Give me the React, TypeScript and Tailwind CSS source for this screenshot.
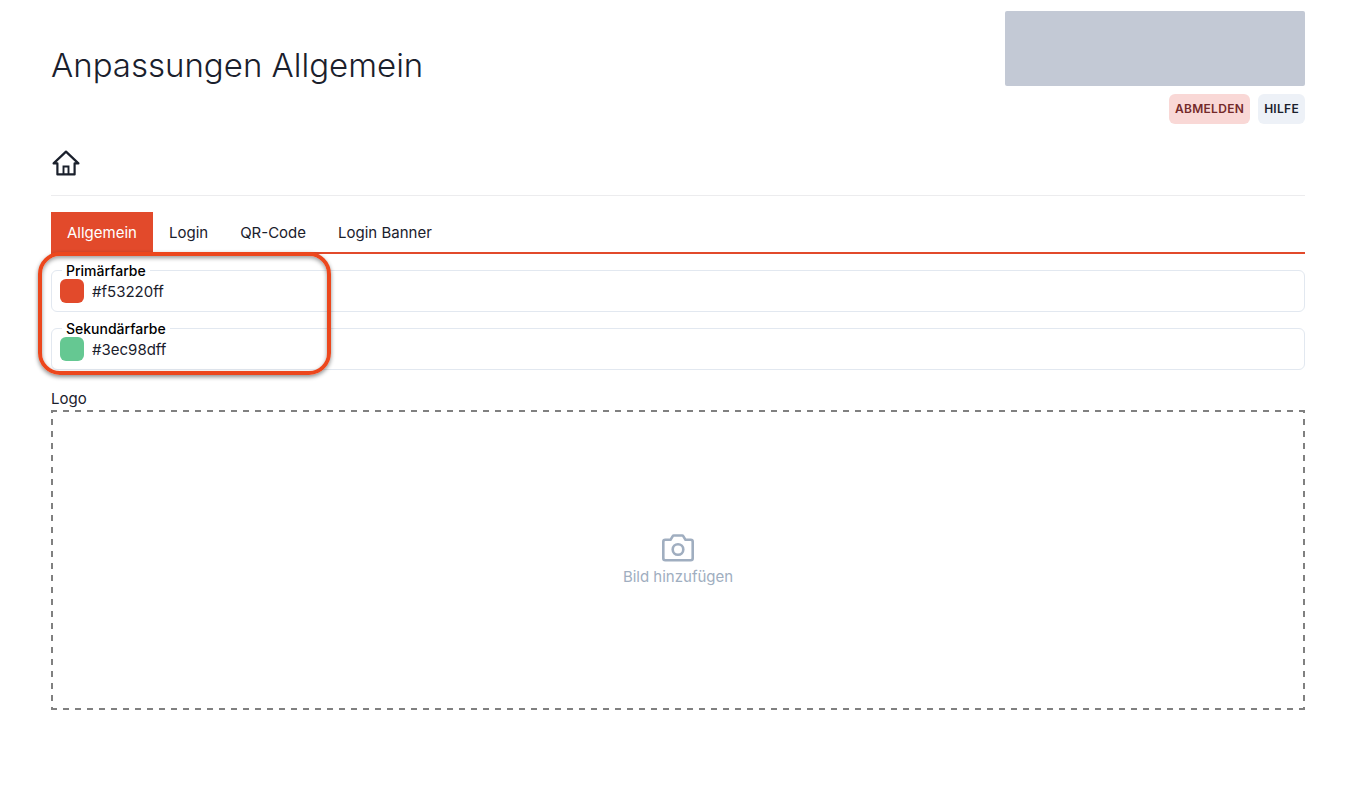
import { useState } from "react";

const tabs = ["Allgemein", "Login", "QR-Code", "Login Banner"];

function HomeIcon() {
  return (
    <svg viewBox="0 0 30 30" className="size-[30px]" fill="none" stroke="currentColor" strokeWidth="2.2" aria-hidden="true">
      <path d="M2.6 15.4H6.400V26.400h17.200V15.400h3.800L15 3.600z" strokeLinejoin="round" />
      <path d="M12.500 26v-7.500h5V26" strokeWidth="1.900" />
    </svg>
  );
}

function CameraIcon() {
  return (
    <svg viewBox="0 0 32 28" className="h-7 w-8" fill="none" stroke="currentColor" strokeWidth="2.6" strokeLinejoin="round" aria-hidden="true">
      <path d="M3.3 5.8h5.2l2.1-3.500c.3-.5.700-.8 1.300-.8h8.200c.6 0 1 .3 1.300.8l2.100 3.500h5.200c1.100 0 2 .9 2 2v16.400c0 1.100-.9 2-2 2H3.300c-1.100 0-2-.9-2-2V7.800c0-1.100.9-2 2-2z" />
      <circle cx="16" cy="15.500" r="5.300" />
    </svg>
  );
}

function ColorField({ id, label, color, swatch }: { id: string; label: string; color: string; swatch: string }) {
  const [value, setValue] = useState(color);
  return (
    <div className="relative flex h-[42px] items-center gap-2 rounded-md border border-[#e2e8f0] px-2">
      <label htmlFor={id} className="absolute -top-2 left-2.5 bg-white px-1 text-[14px] leading-4 font-medium text-black">
        {label}
      </label>
      <span className={`size-6 shrink-0 rounded-md ${swatch}`} />
      <input
        id={id}
        value={value}
        onChange={(e) => setValue(e.target.value)}
        className="min-w-0 flex-1 bg-transparent pt-0.5 text-[15px] leading-6 outline-none"
      />
    </div>
  );
}

export default function App() {
  const [active, setActive] = useState("Allgemein");
  return (
    <main className="min-h-screen bg-white pt-[11px] pr-[61px] pb-10 pl-[51px] font-['Inter',sans-serif] text-[15px] leading-6 text-[#1a202c]">
      <header className="flex items-start justify-between">
        <h1 className="pt-[27px] text-[33px] leading-[54px] font-light">Anpassungen Allgemein</h1>
        <div className="flex flex-col items-end gap-2">
          <div className="h-[75px] w-[300px] rounded-xs bg-[#c3c9d5]" />
          <div className="flex gap-2 text-[12px] font-semibold">
            <button type="button" className="h-[30px] rounded-md bg-[#f9d8d6] px-1.5 tracking-wide text-[#742a2a]">ABMELDEN</button>
            <button type="button" className="h-[30px] rounded-md bg-[#edf1f7] px-1.5 tracking-wide">HILFE</button>
          </div>
        </div>
      </header>

      <nav className="mt-6 flex h-12 items-start border-b border-[#ececee]">
        <a href="#home" aria-label="Startseite"><HomeIcon /></a>
      </nav>

      <div role="tablist" className="mt-4 flex border-b-2 border-[#e24a2b]">
        {tabs.map((tab) => (
          <button
            key={tab}
            type="button"
            role="tab"
            aria-selected={active === tab}
            onClick={() => setActive(tab)}
            className={`h-10 px-4 pt-0.5 ${active === tab ? "bg-[#e24a2b] text-white" : ""}`}
          >
            {tab}
          </button>
        ))}
      </div>

      <div className="relative mt-4 flex flex-col gap-4">
        <ColorField id="primary" label="Primärfarbe" color="#f53220ff" swatch="bg-[#e24a2b]" />
        <ColorField id="secondary" label="Sekundärfarbe" color="#3ec98dff" swatch="bg-[#65c892]" />
        <div className="pointer-events-none absolute -top-[18px] -bottom-[5px] -left-[13px] w-[293px] rounded-[22px] border-4 border-[#ec471d] shadow-[0_2px_4px_rgba(0,0,0,0.45),inset_0_2px_4px_rgba(0,0,0,0.4)]" />
      </div>

      <section className="mt-4">
        <h2 className="pt-0.5 leading-[22px]">Logo</h2>
        <button
          type="button"
          className="flex h-[300px] w-full flex-col items-center justify-center gap-[3px] bg-[image:repeating-linear-gradient(90deg,#808080_0_6px,transparent_6px_12px),repeating-linear-gradient(90deg,#808080_0_6px,transparent_6px_12px),repeating-linear-gradient(180deg,#808080_0_3px,transparent_3px_9px,#808080_9px_12px),repeating-linear-gradient(180deg,#808080_0_3px,transparent_3px_9px,#808080_9px_12px)] bg-[position:0_0,0_100%,0_0,100%_0] bg-[size:100%_2px,100%_2px,2px_100%,2px_100%] bg-no-repeat pt-[3px] text-[#a0aec0]"
        >
          <CameraIcon />
          <span>Bild hinzufügen</span>
        </button>
      </section>
    </main>
  );
}
